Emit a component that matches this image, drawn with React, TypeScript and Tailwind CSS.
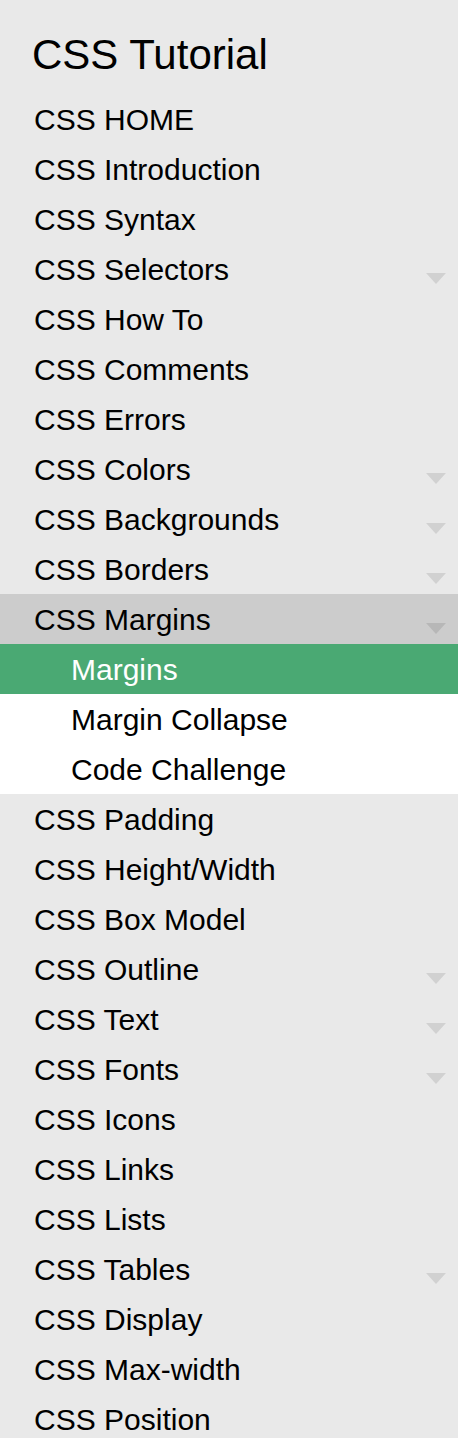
import React from "react";

type Item = { label: string; caret?: boolean; active?: boolean };

const before: Item[] = [
  { label: "CSS HOME" },
  { label: "CSS Introduction" },
  { label: "CSS Syntax" },
  { label: "CSS Selectors", caret: true },
  { label: "CSS How To" },
  { label: "CSS Comments" },
  { label: "CSS Errors" },
  { label: "CSS Colors", caret: true },
  { label: "CSS Backgrounds", caret: true },
  { label: "CSS Borders", caret: true },
];

const after: Item[] = [
  { label: "CSS Padding" },
  { label: "CSS Height/Width" },
  { label: "CSS Box Model" },
  { label: "CSS Outline", caret: true },
  { label: "CSS Text", caret: true },
  { label: "CSS Fonts", caret: true },
  { label: "CSS Icons" },
  { label: "CSS Links" },
  { label: "CSS Lists" },
  { label: "CSS Tables", caret: true },
  { label: "CSS Display" },
  { label: "CSS Max-width" },
  { label: "CSS Position" },
];

function Caret() {
  return (
    <svg width="22" height="13" viewBox="0 0 22 13" className="self-start mt-[26px] shrink-0">
      <path d="M1 1 H21 L11 12 Z" fill="#000" fillOpacity="0.1" />
    </svg>
  );
}

function Row({ item }: { item: Item }) {
  return (
    <div className="flex h-[50px] items-center justify-between pl-[34px] pr-[11px] pt-[2px] text-[30px] leading-[48px] text-black">
      <span>{item.label}</span>
      {item.caret && <Caret />}
    </div>
  );
}

export default function App() {
  return (
    <div
      className="w-[458px] h-[1438px] overflow-hidden bg-[#e9e9e9]"
      style={{ fontFamily: '"Liberation Sans", Arial, sans-serif' }}
    >
      <div className="h-[94px] pl-[32px] pt-[31px] text-[42px] leading-[48px] text-black">CSS Tutorial</div>
      {before.map((it) => (
        <Row key={it.label} item={it} />
      ))}
      <div className="flex h-[50px] items-center justify-between bg-[#cccccc] pl-[34px] pr-[11px] pt-[2px] text-[30px] leading-[48px] text-black">
        <span>CSS Margins</span>
        <Caret />
      </div>
      <div className="bg-white">
        <div className="h-[50px] bg-[#4aa973] pl-[71px] pt-[2px] text-[30px] leading-[48px] text-white">Margins</div>
        <div className="h-[50px] pl-[71px] pt-[2px] text-[30px] leading-[48px] text-black">Margin Collapse</div>
        <div className="h-[50px] pl-[71px] pt-[2px] text-[30px] leading-[48px] text-black">Code Challenge</div>
      </div>
      {after.map((it) => (
        <Row key={it.label} item={it} />
      ))}
    </div>
  );
}
